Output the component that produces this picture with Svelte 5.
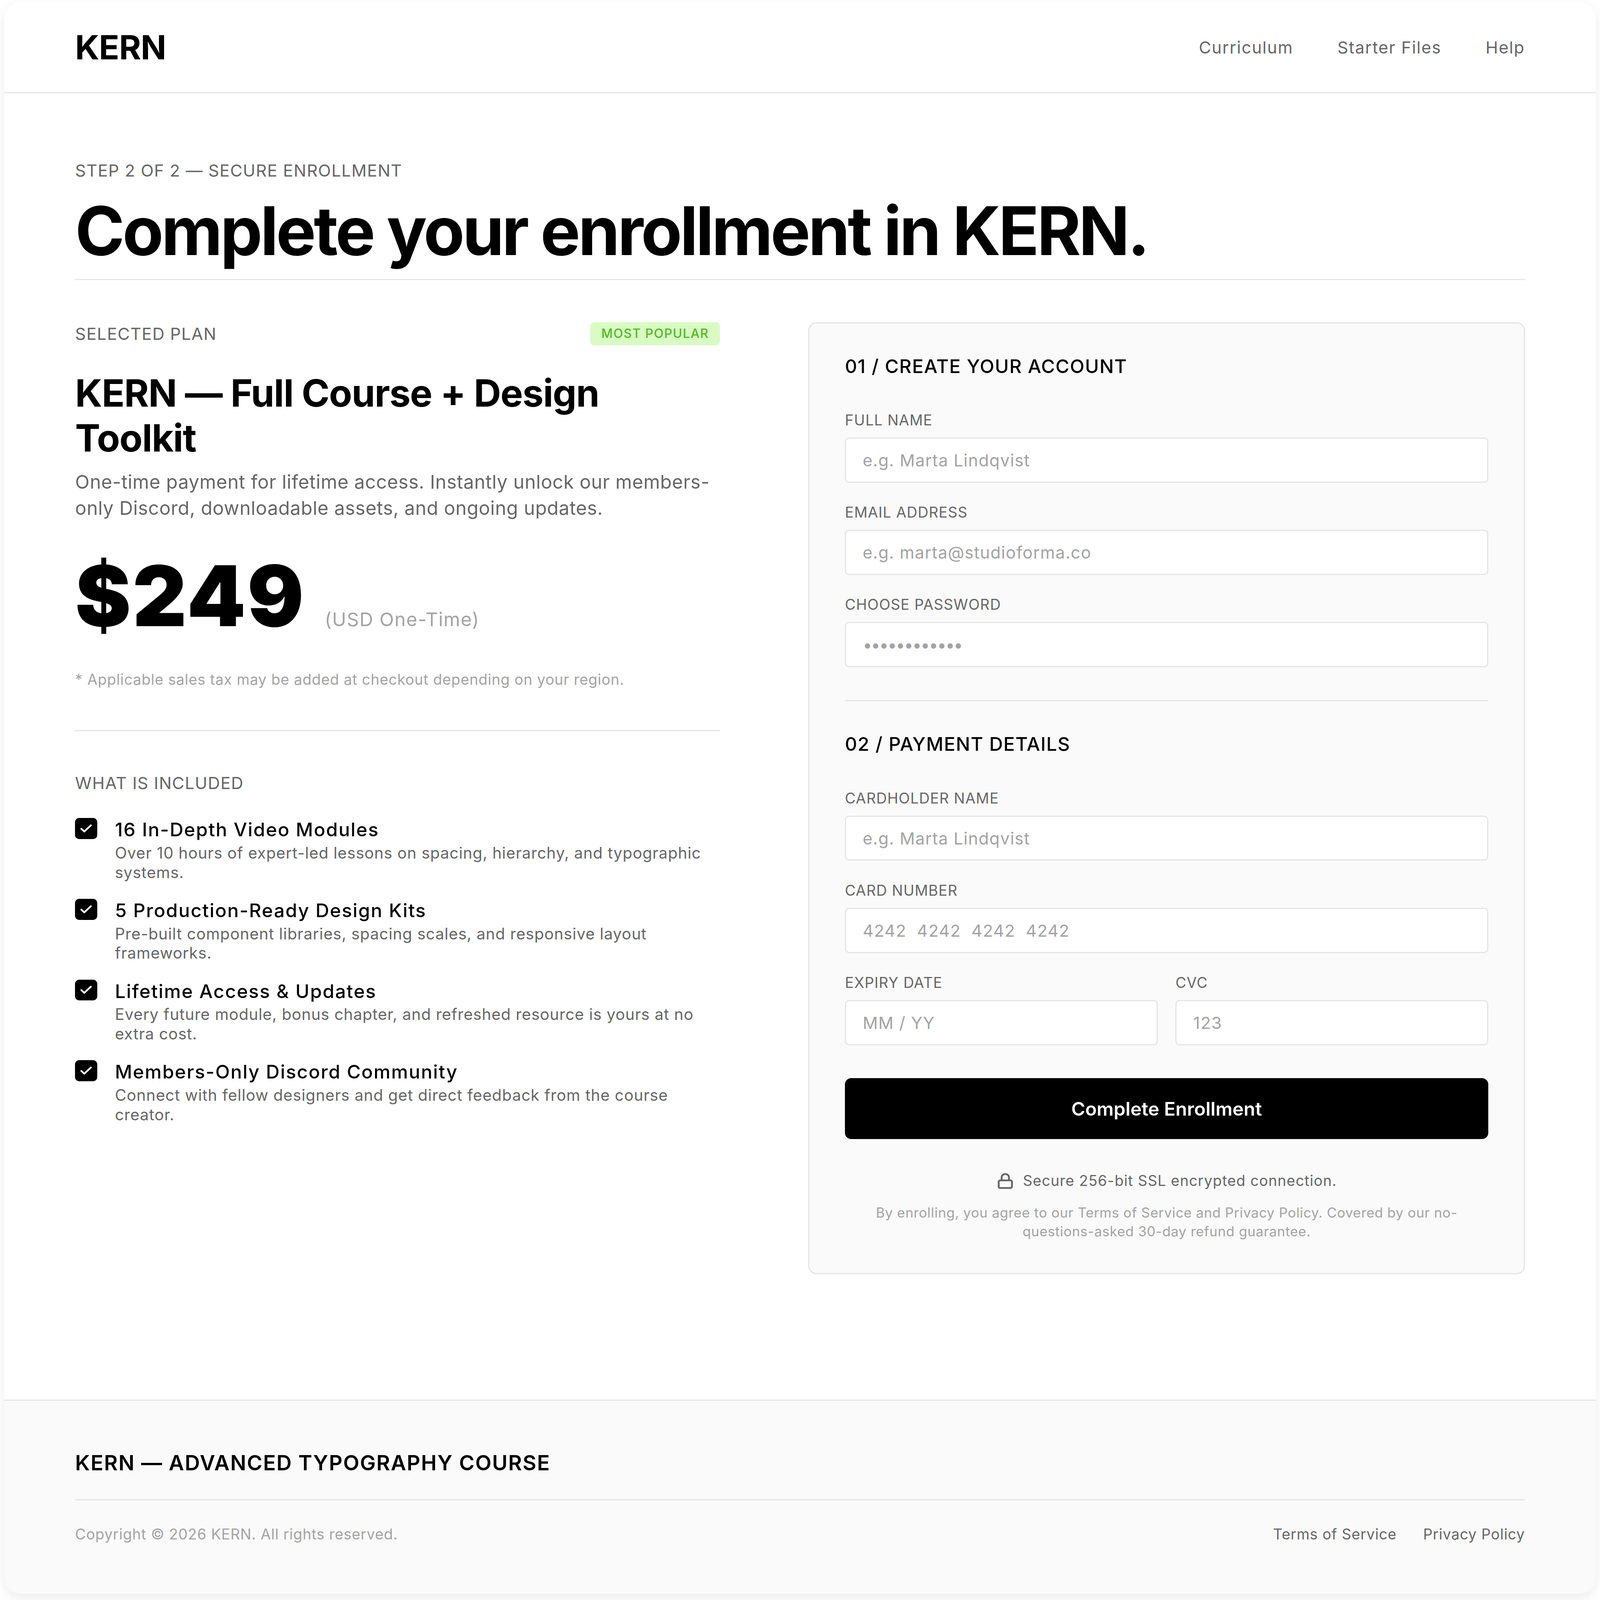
<script>
	const account = [
		{ label: 'Full Name', placeholder: 'e.g. Marta Lindqvist', type: 'text' },
		{ label: 'Email Address', placeholder: 'e.g. marta@studioforma.co', type: 'email' },
		{ label: 'Choose Password', placeholder: '••••••••••••', type: 'password' }
	];
	const included = [
		{ title: '16 In-Depth Video Modules', text: 'Over 10 hours of expert-led lessons on spacing, hierarchy, and typographic systems.' },
		{ title: '5 Production-Ready Design Kits', text: 'Pre-built component libraries, spacing scales, and responsive layout frameworks.' },
		{ title: 'Lifetime Access & Updates', text: 'Every future module, bonus chapter, and refreshed resource is yours at no extra cost.' },
		{ title: 'Members-Only Discord Community', text: 'Connect with fellow designers and get direct feedback from the course creator.' }
	];
</script>

<div class="page">
	<div class="shell">
		<header>
			<div class="logo">KERN</div>
			<nav>
				<a href="#curriculum">Curriculum</a>
				<a href="#starter">Starter Files</a>
				<a href="#help">Help</a>
			</nav>
		</header>

		<main>
			<div class="heading">
				<p class="eyebrow">STEP 2 OF 2 — SECURE ENROLLMENT</p>
				<h1>Complete your enrollment in KERN.</h1>
			</div>

			<div class="columns">
				<section class="plan">
					<div class="plan-top">
						<span class="eyebrow">SELECTED PLAN</span>
						<span class="badge">MOST POPULAR</span>
					</div>
					<h2>KERN — Full Course + Design Toolkit</h2>
					<p class="summary">One-time payment for lifetime access. Instantly unlock our members-only Discord, downloadable assets, and ongoing updates.</p>
					<div class="price">
						<strong>$249</strong>
						<span>(USD One-Time)</span>
					</div>
					<p class="tax">* Applicable sales tax may be added at checkout depending on your region.</p>
					<hr />
					<p class="eyebrow">WHAT IS INCLUDED</p>
					<ul>
						{#each included as item}
							<li>
								<span class="tick">
									<svg viewBox="0 0 24 24" preserveAspectRatio="none" fill="none" stroke="#fff" stroke-width="3" stroke-linecap="round" stroke-linejoin="round"><polyline points="20 6 9 17 4 12" /></svg>
								</span>
								<div>
									<h3>{item.title}</h3>
									<p>{item.text}</p>
								</div>
							</li>
						{/each}
					</ul>
				</section>

				<form class="checkout">
					<h4>01 / CREATE YOUR ACCOUNT</h4>
					{#each account as field}
						<label>
							<span>{field.label}</span>
							<input class:dots={field.type === 'password'} type={field.type} placeholder={field.placeholder} />
						</label>
					{/each}

					<div class="rule"></div>

					<h4>02 / PAYMENT DETAILS</h4>
					<label>
						<span>Cardholder Name</span>
						<input type="text" placeholder="e.g. Marta Lindqvist" />
					</label>
					<label>
						<span>Card Number</span>
						<input type="text" placeholder="4242  4242  4242  4242" />
					</label>
					<div class="pair">
						<label>
							<span>Expiry Date</span>
							<input type="text" placeholder="MM / YY" />
						</label>
						<label>
							<span>CVC</span>
							<input type="text" placeholder="123" />
						</label>
					</div>

					<button type="button">Complete Enrollment</button>

					<p class="secure">
						<svg viewBox="0 0 24 24" preserveAspectRatio="none" fill="none" stroke="#666" stroke-width="2.5" stroke-linecap="round" stroke-linejoin="round"><rect x="3" y="11" width="18" height="11" rx="2" /><path d="M7 11V7a5 5 0 0 1 10 0v4" /></svg>
						Secure 256-bit SSL encrypted connection.
					</p>
					<p class="terms">By enrolling, you agree to our Terms of Service and Privacy Policy. Covered by our no-questions-asked 30-day refund guarantee.</p>
				</form>
			</div>
		</main>

		<footer>
			<div class="foot-title">KERN — ADVANCED TYPOGRAPHY COURSE</div>
			<div class="foot-row">
				<span>Copyright © 2026 KERN. All rights reserved.</span>
				<div class="foot-links">
					<a href="#terms">Terms of Service</a>
					<a href="#privacy">Privacy Policy</a>
				</div>
			</div>
		</footer>
	</div>
</div>

<style>
	/* design is 1448 x 1526, --x and --y map it onto whatever the window really is */
	:global(body) {
		margin: 0;
		background: #fff;
	}
	.page {
		--x: calc(100vw / 1448);
		--y: calc(100vh / 1526);
		--fs: 16;
		--ls: 0;
		box-sizing: border-box;
		display: flex;
		height: 100vh;
		overflow: hidden;
		padding: calc(2 * var(--y)) calc(4 * var(--x)) calc(6 * var(--y));
		font-family: Inter, 'Noto Sans', sans-serif;
		color: #000;
	}
	.page,
	.page * {
		font-size: calc(var(--fs) * var(--y));
		letter-spacing: calc(var(--fs) * (var(--ls) * var(--y) + 0.57 * (var(--x) - var(--y))));
	}
	.shell {
		flex: 1;
		display: flex;
		flex-direction: column;
		background: #fff;
		border-radius: calc(16 * var(--y));
		overflow: hidden;
		box-shadow: 0 calc(4 * var(--y)) calc(12 * var(--y)) rgba(0, 0, 0, 0.08);
	}
	p,
	h1,
	h2,
	h3,
	h4,
	ul {
		margin: 0;
		padding: 0;
	}
	a {
		text-decoration: none;
		color: inherit;
	}

	header {
		display: flex;
		justify-content: space-between;
		align-items: center;
		padding: calc(24 * var(--y)) calc(64 * var(--x));
		border-bottom: 3px solid #e5e5e5;
	}
	.logo {
		--fs: 32;
		--ls: -0.04;
		line-height: calc(38 * var(--y));
		font-weight: 700;
	}
	nav {
		--ls: 0.01;
		display: flex;
		gap: calc(40 * var(--x));
		color: #666;
	}

	main {
		flex: 1;
		padding: calc(64 * var(--y)) calc(64 * var(--x)) calc(116 * var(--y));
	}
	.eyebrow {
		line-height: calc(19 * var(--y));
		color: #666;
	}
	.heading {
		padding-bottom: calc(11 * var(--y));
		border-bottom: 3px solid #e5e5e5;
		margin-bottom: calc(40 * var(--y));
	}
	h1 {
		--fs: 64;
		--ls: -0.065;
		margin-top: calc(13 * var(--y));
		line-height: calc(70 * var(--y));
		font-weight: 700;
	}

	.columns {
		display: grid;
		grid-template-columns: 0.9fr 1fr;
		gap: calc(80 * var(--x));
		align-items: start;
	}

	.plan-top {
		display: flex;
		justify-content: space-between;
		align-items: center;
	}
	.badge {
		--fs: 12;
		--ls: 0.02;
		padding: calc(4 * var(--y)) calc(10 * var(--x));
		border-radius: calc(4 * var(--y));
		line-height: calc(14 * var(--y));
		font-weight: 500;
		background: #d9fbc3;
		color: #4fba22;
	}
	h2 {
		--fs: 36;
		--ls: -0.045;
		margin-top: calc(24 * var(--y));
		line-height: calc(43 * var(--y));
		font-weight: 700;
	}
	.summary {
		--fs: 18;
		--ls: -0.018;
		margin-top: calc(8 * var(--y));
		line-height: calc(25 * var(--y));
		color: #666;
	}
	.price {
		display: flex;
		align-items: baseline;
		gap: calc(17.5 * var(--x));
		margin-top: calc(31 * var(--y));
	}
	.price strong {
		--fs: 80;
		--ls: -0.013;
		line-height: calc(80 * var(--y));
		font-weight: 900;
	}
	.price span {
		--fs: 18;
		color: #a3a3a3;
	}
	.tax {
		--fs: 14;
		--ls: -0.008;
		margin-top: calc(30 * var(--y));
		line-height: calc(20 * var(--y));
		color: #a3a3a3;
	}
	hr {
		border: 0;
		border-top: 3px solid #e5e5e5;
		margin: calc(38 * var(--y)) 0 calc(40 * var(--y));
	}
	ul {
		list-style: none;
		margin-top: calc(24 * var(--y));
		display: flex;
		flex-direction: column;
		gap: calc(16 * var(--y));
	}
	li {
		display: flex;
		gap: calc(16 * var(--x));
	}
	.tick {
		flex: none;
		width: calc(20 * var(--x));
		height: calc(20 * var(--y));
		border-radius: calc(4 * var(--y));
		background: #000;
		display: flex;
		align-items: center;
		justify-content: center;
	}
	.tick svg {
		width: calc(13 * var(--x));
		height: calc(13 * var(--y));
	}
	h3 {
		--fs: 18;
		--ls: 0.012;
		line-height: calc(22 * var(--y));
		font-weight: 500;
	}
	li p {
		--fs: 15;
		--ls: -0.008;
		margin-top: calc(2 * var(--y));
		line-height: calc(18.5 * var(--y));
		color: #666;
	}

	.checkout {
		display: flex;
		flex-direction: column;
		padding: calc(32 * var(--y)) calc(32 * var(--x)) calc(31 * var(--y));
		background: #fafafa;
		border: 3px solid #e5e5e5;
		border-radius: calc(8 * var(--y));
	}
	h4 {
		--fs: 18;
		line-height: calc(18 * var(--y));
		font-weight: 500;
		margin-bottom: calc(14 * var(--y));
	}
	label {
		display: flex;
		flex-direction: column;
		gap: calc(8 * var(--y));
		margin-top: calc(20 * var(--y));
	}
	label span {
		--fs: 14;
		line-height: calc(17 * var(--y));
		color: #666;
		text-transform: uppercase;
	}
	input {
		box-sizing: border-box;
		width: 100%;
		height: calc(43 * var(--y));
		padding: 0 calc(15 * var(--x));
		background: #fff;
		border: 3px solid #e5e5e5;
		border-radius: calc(4 * var(--y));
		font-family: inherit;
		outline: none;
	}
	input.dots {
		--ls: -0.1;
	}
	input::placeholder {
		color: #a3a3a3;
		opacity: 1;
	}
	.rule {
		height: 3px;
		background: #e5e5e5;
		margin: calc(31.5 * var(--y)) 0 calc(32 * var(--y));
	}
	.pair {
		display: grid;
		grid-template-columns: 1fr 1fr;
		gap: calc(16 * var(--x));
	}
	button {
		--fs: 18;
		--ls: -0.03;
		margin-top: calc(31.5 * var(--y));
		height: calc(58 * var(--y));
		border: 0;
		border-radius: calc(6 * var(--y));
		background: #000;
		color: #fff;
		font-family: inherit;
		font-weight: 600;
	}
	.secure {
		--fs: 14;
		display: flex;
		align-items: center;
		justify-content: center;
		gap: calc(8 * var(--x));
		margin-top: calc(30 * var(--y));
		line-height: calc(20 * var(--y));
		color: #666;
	}
	.secure svg {
		width: calc(16 * var(--x));
		height: calc(16 * var(--y));
	}
	.terms {
		--fs: 13;
		--ls: -0.01;
		margin-top: calc(11 * var(--y));
		line-height: calc(18 * var(--y));
		text-align: center;
		color: #a3a3a3;
	}

	footer {
		padding: calc(48 * var(--y)) calc(64 * var(--x));
		background: #fafafa;
		border-top: 3px solid #e5e5e5;
	}
	.foot-title {
		--fs: 20;
		--ls: 0.004;
		line-height: calc(22 * var(--y));
		font-weight: 600;
		padding-bottom: calc(24 * var(--y));
		border-bottom: 3px solid #e5e5e5;
	}
	.foot-row {
		--fs: 14;
		--ls: -0.008;
		display: flex;
		justify-content: space-between;
		padding-top: calc(24 * var(--y));
		line-height: calc(17 * var(--y));
		color: #a3a3a3;
	}
	.foot-links {
		display: flex;
		gap: calc(24 * var(--x));
		color: #666;
	}
</style>
